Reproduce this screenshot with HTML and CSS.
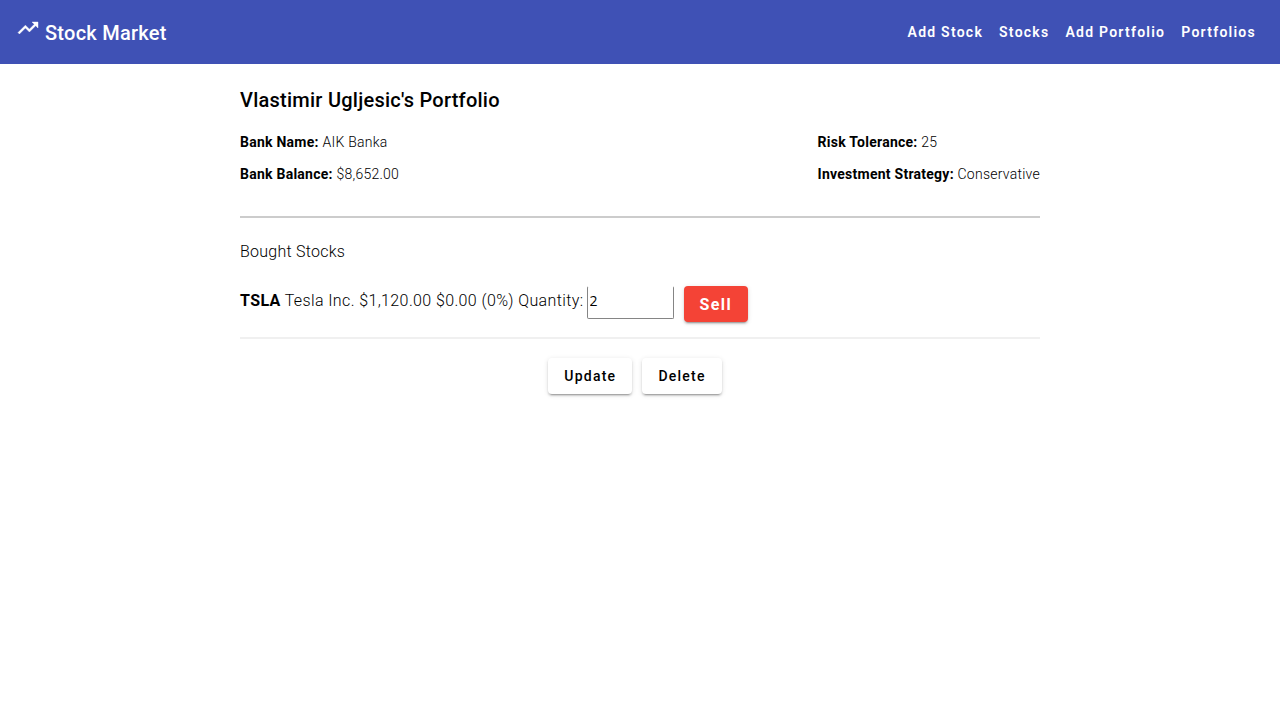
FILE: index.html
```html
<!DOCTYPE html>
<html lang="en">
<head>
<meta charset="utf-8">
<meta name="viewport" content="width=device-width, initial-scale=1">
<title>Stock Market</title>
<link rel="stylesheet" href="styles.css">
</head>
<body>
<header class="toolbar">
  <a class="brand" href="#"><svg class="brand-icon" viewBox="0 0 24 24" aria-hidden="true"><path fill="currentColor" stroke="currentColor" stroke-width=".4" d="M16 6l2.29 2.29-4.88 4.88-4-4L2 16.59 3.41 18l6-6 4 4 6.3-6.29L22 12V6z"/></svg><span>Stock Market</span></a>
  <nav class="nav">
    <a href="#">Add Stock</a>
    <a href="#">Stocks</a>
    <a href="#">Add Portfolio</a>
    <a href="#">Portfolios</a>
  </nav>
</header>
<main class="content">
  <h1 class="title">Vlastimir Ugljesic's Portfolio</h1>
  <section class="details">
    <div class="column">
      <p><strong>Bank Name:</strong> AIK Banka</p>
      <p><strong>Bank Balance:</strong> $8,652.00</p>
    </div>
    <div class="column">
      <p><strong>Risk Tolerance:</strong> 25</p>
      <p><strong>Investment Strategy:</strong> Conservative</p>
    </div>
  </section>
  <h2 class="subtitle">Bought Stocks</h2>
  <form class="stock">
    <label for="quantity"><strong>TSLA</strong> Tesla Inc. $1,120.00 $0.00 (0%) Quantity:</label>
    <input class="quantity" id="quantity" type="number" value="2">
    <button class="button button-sell" type="button">Sell</button>
  </form>
  <div class="actions">
    <button class="button" type="button">Update</button>
    <button class="button" type="button">Delete</button>
  </div>
</main>
</body>
</html>
```
FILE: styles.css
```css
* {
  box-sizing: border-box;
}

body {
  margin: 0;
  background: #fff;
  color: #000;
  font-family: Roboto, sans-serif;
}

.toolbar {
  display: flex;
  align-items: center;
  justify-content: space-between;
  min-height: 64px;
  padding: 0 24px 0 16px;
  background: #3f51b5;
  color: #fff;
}

.brand {
  display: flex;
  align-items: flex-start;
  gap: 5px;
  color: inherit;
  font-size: 20px;
  font-weight: 500;
  letter-spacing: 0.0125em;
  line-height: 32px;
  text-decoration: none;
}

.brand span {
  padding-top: 1px;
}

.brand-icon {
  width: 24px;
  height: 24px;
}

.nav {
  display: flex;
  gap: 16px;
}

.nav a {
  color: inherit;
  font-size: 14px;
  font-weight: 600;
  letter-spacing: 0.0893em;
  line-height: 36px;
  text-decoration: none;
}

.content {
  max-width: 800px;
  margin: 0 auto;
  padding-top: 20px;
}

.title {
  margin: 0 0 16px;
  font-size: 20px;
  font-weight: 500;
  letter-spacing: 0.0125em;
  line-height: 32px;
}

.details {
  display: flex;
  justify-content: space-between;
  padding-bottom: 20px;
  border-bottom: 2px solid #ccc;
  font-size: 14px;
  font-weight: 300;
  letter-spacing: 0.0179em;
  line-height: 20px;
}

.details p {
  margin: 0 0 12px;
}

strong {
  font-weight: 700;
}

.subtitle {
  margin: 20px 0;
  font-size: 16px;
  font-weight: 300;
  letter-spacing: 0.0156em;
  line-height: 28px;
}

.stock {
  display: flex;
  align-items: flex-start;
  padding-bottom: 15px;
  border-bottom: 2px solid #f0f0f0;
  font-size: 16px;
  font-weight: 300;
  letter-spacing: 0.0238em;
  line-height: 30px;
}

.quantity {
  width: 87px;
  height: 33px;
  margin: 0 10px 0 3px;
  padding: 0 2px 4px;
  border: 1px solid #858585;
  border-top-color: #fff;
  border-radius: 2px;
  background: #fff;
  color: #000;
  font: 14px "Open Sans", sans-serif;
}

.button {
  height: 36px;
  padding: 0 16px;
  border: 0;
  border-radius: 4px;
  background: #fff;
  box-shadow: 0 3px 1px -2px rgba(0, 0, 0, 0.2), 0 2px 2px rgba(0, 0, 0, 0.14), 0 1px 5px rgba(0, 0, 0, 0.12);
  color: #000;
  font: 500 14px Roboto, sans-serif;
  letter-spacing: 0.0893em;
  cursor: pointer;
}

.button-sell {
  background: #f44336;
  color: #fff;
  font-size: 16px;
  font-weight: 700;
}

.actions {
  display: flex;
  justify-content: center;
  gap: 10px;
  padding: 19px 10px 20px 0;
}
```
